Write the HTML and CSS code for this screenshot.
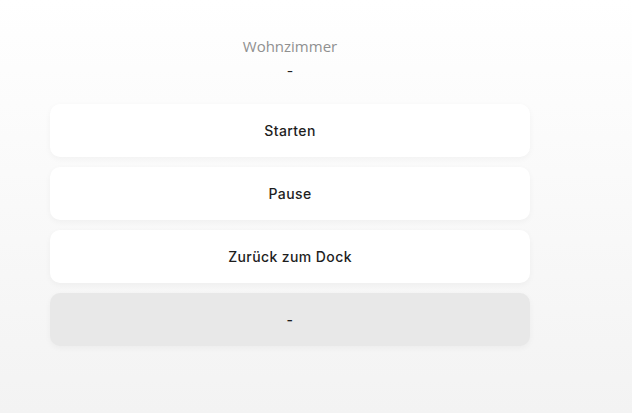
FILE: index.html
```html
<!DOCTYPE html>
<html lang="en">

<head>
    <meta charset="UTF-8">
    <meta name="viewport" content="width=device-width, initial-scale=1.0">
    <title>Wohnzimmer</title>
    <link rel="stylesheet" href="styles.css">
</head>

<body>
    <div class="panel">
        <div class="head">
            <div class="room">Wohnzimmer</div>
            <div class="state">-</div>
        </div>
        <div class="actions">
            <button class="action">Starten</button>
            <button class="action">Pause</button>
            <button class="action">Zurück zum Dock</button>
            <button class="action off">-</button>
        </div>
    </div>
</body>

</html>
```

FILE: styles.css
```css
html,
body {
    height: 100%;
}

body {
    margin: 0;
    padding: 0;
    background: linear-gradient(#ffffff, #f3f3f3);
    font-family: Inter, 'Noto Sans', sans-serif;
}

.panel {
    width: 480px;
    margin-left: 50px;
    padding-top: 36px;
}

.head {
    text-align: center;
}

.room {
    font-family: 'Open Sans', sans-serif;
    font-size: 15px;
    line-height: 20px;
    color: #909090;
}

.state {
    margin-top: 5px;
    font-size: 14px;
    line-height: 20px;
    color: #222;
}

.actions {
    display: flex;
    flex-direction: column;
    gap: 10px;
    margin-top: 23px;
}

.action {
    height: 53px;
    border: none;
    border-radius: 10px;
    background-color: #fff;
    box-shadow: 0 2px 6px rgba(0, 0, 0, 0.04);
    font-family: Inter, 'Noto Sans', sans-serif;
    font-size: 14px;
    font-weight: 500;
    letter-spacing: 0.4px;
    color: #1e1e1e;
}

.action.off {
    background-color: #e8e8e8;
}
```
